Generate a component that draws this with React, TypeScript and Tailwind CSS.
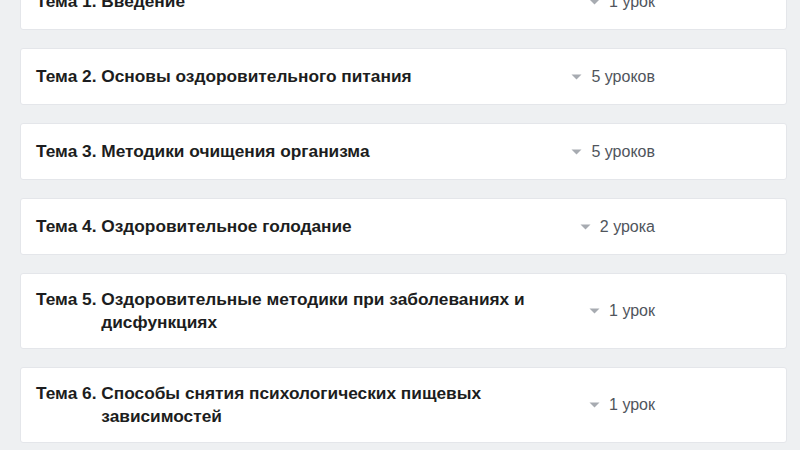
import React from 'react';

type Topic = { num: number; title: string; lessons: string };

const topics: Topic[] = [
    { num: 1, title: 'Введение', lessons: '1 урок' },
    { num: 2, title: 'Основы оздоровительного питания', lessons: '5 уроков' },
    { num: 3, title: 'Методики очищения организма', lessons: '5 уроков' },
    { num: 4, title: 'Оздоровительное голодание', lessons: '2 урока' },
    { num: 5, title: 'Оздоровительные методики при заболеваниях и дисфункциях', lessons: '1 урок' },
    { num: 6, title: 'Способы снятия психологических пищевых зависимостей', lessons: '1 урок' },
];

const Caret: React.FC = () => (
    <svg width="11" height="6" viewBox="0 0 11 6" className="shrink-0">
        <path d="M0.5 0.5 L10.5 0.5 L5.5 5.5 Z" fill="#a7abb1" />
    </svg>
);

const App: React.FC = () => {
    return (
        <div
            className="w-[800px] h-[450px] overflow-hidden bg-[#eef0f2]"
            style={{ fontFamily: '"Liberation Sans", Arial, sans-serif' }}
        >
            <div className="flex flex-col gap-[18px] pl-5 pr-[13px] mt-[-27px]">
                {topics.map(t => (
                    <div
                        key={t.num}
                        className="flex items-center min-h-[57px] py-[14px] pl-[15px] pr-[131px] bg-white border border-[#e4e6ea] rounded-[3px]"
                    >
                        <div className="flex flex-1 text-[17.3px] leading-[23px] font-bold text-[#1c1d20]">
                            <span className="whitespace-pre">Тема {t.num}. </span>
                            <span className="max-w-[450px]">{t.title}</span>
                        </div>
                        <div className="flex items-center gap-[9px] text-[16px] text-[#50555c]">
                            <Caret />
                            <span>{t.lessons}</span>
                        </div>
                    </div>
                ))}
            </div>
        </div>
    );
};

export default App;
